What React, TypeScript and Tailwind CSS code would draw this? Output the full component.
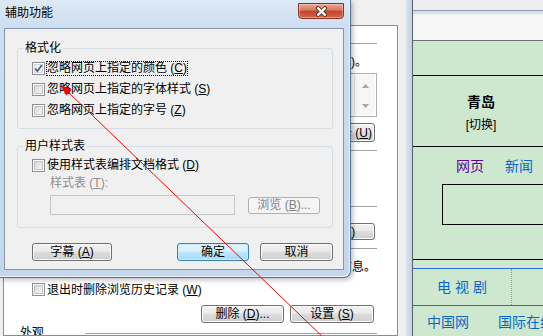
import type { ReactNode } from "react";

function Key({ k }: { k: string }) {
  return (
    <>
      (<span className="underline underline-offset-[1px]">{k}</span>)
    </>
  );
}

function CheckBox({ checked = false }: { checked?: boolean }) {
  return (
    <span className="flex h-[13px] w-[13px] shrink-0 items-center justify-center border border-[#8f8f8f] bg-white p-[1px]">
      <span
        className={`flex h-full w-full items-center justify-center border ${
          checked
            ? "border-[#d3d9e2] bg-[linear-gradient(135deg,#e9edf3,#fbfbfb)]"
            : "border-[#c4c4c4] bg-[linear-gradient(135deg,#d8d8d8,#f6f6f6)]"
        }`}
      >
        {checked && (
          <svg width="9" height="9" viewBox="0 0 9 9" className="shrink-0 overflow-visible">
            <path d="M1.2 4.6 L3.4 7.2 L7.9 1" fill="none" stroke="#4a5d8f" strokeWidth="1.7" />
          </svg>
        )}
      </span>
    </span>
  );
}

function Radio() {
  return <span className="h-[13px] w-[13px] shrink-0 rounded-full border border-[#8f8f8f] bg-[#f4f4f4]" />;
}

const buttonStyles = {
  normal:
    "border-[#707070] bg-[linear-gradient(#f2f2f2,#ebebeb_45%,#dddddd_50%,#cfcfcf)] shadow-[inset_0_0_0_1px_#fbfbfb] text-black",
  primary:
    "border-[#3c7fb1] bg-[linear-gradient(#eaf6fd,#d9f0fc_45%,#bee6fd_50%,#a7d9f5)] shadow-[inset_0_0_0_1px_#c9ecfb] text-black",
  disabled: "border-[#adb2b5] bg-[#f4f4f4] text-[#838383]",
};

function WinButton({
  children,
  className = "",
  variant = "normal",
}: {
  children: ReactNode;
  className?: string;
  variant?: "normal" | "primary" | "disabled";
}) {
  return (
    <div
      className={`flex shrink-0 items-center justify-center whitespace-nowrap rounded-[3px] border leading-[14px] ${buttonStyles[variant]} ${className}`}
    >
      {children}
    </div>
  );
}

function SectionHeader({ label, className = "" }: { label: string; className?: string }) {
  return (
    <div className={`flex h-[14px] shrink-0 items-center pl-[16px] pr-[20px] ${className}`}>
      <span className="w-[65px] shrink-0 leading-[14px]">{label}</span>
      <span className="h-px flex-1 bg-[#a0a0a0]" />
    </div>
  );
}

function InternetOptions() {
  return (
    <div className="flex w-[413px] shrink-0">
      <div className="flex w-[405px] flex-col bg-[#f0f0f0] pl-[3px] pr-[7px] pt-[25px]">
        <div className="flex flex-1 flex-col overflow-hidden border border-[#898c95] bg-white">
          <SectionHeader label="主页" className="mt-[10px]" />
          <div className="mt-[5px] shrink-0 whitespace-nowrap pr-[30px] text-right leading-[14px]">
            若要创建多个主页选项卡，请在各行分别键入地址 <Key k="R" />。
          </div>
          <div className="ml-[31px] mr-[20px] mt-[4px] flex h-[44px] shrink-0 justify-end border border-[#abadb3] p-px">
            <div className="flex w-[21px] flex-col items-center justify-between border-l border-[#e3e3e3] bg-[#f6f6f6] pb-[7px] pt-[9px]">
              <svg width="7" height="4" viewBox="0 0 7 4">
                <path d="M0 4 L3.5 0 L7 4 Z" fill="#a6a6a6" />
              </svg>
              <svg width="7" height="4" viewBox="0 0 7 4">
                <path d="M0 0 L3.5 4 L7 0 Z" fill="#a6a6a6" />
              </svg>
            </div>
          </div>
          <div className="mt-[6px] flex h-[19px] shrink-0 justify-end gap-[6px] pr-[22px]">
            <WinButton className="w-[96px]">
              使用当前页 <Key k="C" />
            </WinButton>
            <WinButton className="w-[96px]">
              使用默认值 <Key k="F" />
            </WinButton>
            <WinButton className="w-[98px]">
              使用新选项卡 <Key k="U" />
            </WinButton>
          </div>
          <SectionHeader label="启动" className="mt-[1px]" />
          <div className="mt-[4px] flex h-[16px] shrink-0 items-center gap-[3px] pl-[28px] leading-[14px]">
            <Radio />
            从上次会话中的选项卡开始 <Key k="B" />
          </div>
          <div className="mt-[2px] flex h-[16px] shrink-0 items-center gap-[3px] pl-[28px] leading-[14px]">
            <Radio />
            从主页开始 <Key k="H" />
          </div>
          <SectionHeader label="选项卡" className="mt-[4px]" />
          <div className="mt-[10px] flex h-[17px] shrink-0 items-center justify-between pl-[28px] pr-[22px]">
            <span className="leading-[14px]">更改网页在选项卡中的显示方式。</span>
            <WinButton className="h-[17px] w-[94px]">
              选项卡 <Key k="T" />
            </WinButton>
          </div>
          <SectionHeader label="浏览历史记录" className="mt-[1px]" />
          <div className="mt-[5px] shrink-0 whitespace-nowrap pr-[21px] text-right leading-[14px]">
            删除临时文件、历史记录、Cookie、保存的密码和网页表单信息。
          </div>
          <div className="mt-[6px] flex h-[19px] shrink-0 items-center pl-[28px]">
            <CheckBox />
            <span className="ml-[2px] leading-[14px]">
              退出时删除浏览历史记录 <Key k="W" />
            </span>
          </div>
          <div className="mt-[6px] flex h-[18px] shrink-0 justify-end gap-[6px] pr-[23px]">
            <WinButton className="w-[83px]">
              删除 <Key k="D" />
              ...
            </WinButton>
            <WinButton className="w-[84px]">
              设置 <Key k="S" />
            </WinButton>
          </div>
          <SectionHeader label="外观" className="mt-[3px]" />
        </div>
      </div>
      <div className="w-[8px] border-l border-r border-l-[#e9eef5] border-r-[#56616e] bg-[linear-gradient(90deg,#d9e1ec,#c7d2e0)]" />
    </div>
  );
}

function BrowserPage() {
  return (
    <div className="flex min-w-0 flex-1 flex-col overflow-hidden">
      <div className="h-[10px] shrink-0 bg-[#ebedf0]" />
      <div className="h-[4px] shrink-0 border-t border-[#8d9cb0] bg-[#d4dde9]" />
      <div className="h-[27px] shrink-0 border-b border-[#6f6f6f] bg-[#f6f6f6]" />
      <div className="flex w-[260px] flex-1 flex-col bg-[#cde8cf]">
        <div className="h-[35px] shrink-0 border-b border-black" />
        <div className="h-[71px] shrink-0 border-b border-black">
          <div className="flex w-[136px] flex-col items-center pt-[18px]">
            <span className="text-[14px] font-bold leading-[16px]">青岛</span>
            <span className="mt-[8px] leading-[14px]">[切换]</span>
          </div>
        </div>
        <div className="h-[113px] shrink-0 border-b border-black">
          <div className="flex pl-[43px] pt-[11px] text-[14px] leading-[16px]">
            <span className="text-[#660099]">网页</span>
            <span className="ml-[21px] text-[#0a66cc]">新闻</span>
          </div>
          <div className="ml-[29px] mt-[10px] h-[41px] w-[200px] border border-black" />
        </div>
        <div className="mt-[8px] flex h-[38px] shrink-0 border-y border-[#2470d8]">
          <div className="flex w-[99px] items-center justify-center border-r border-dotted border-[#7f9fc0] text-[14px] leading-[16px] text-[#0a66cc]">
            电 视 剧
          </div>
        </div>
        <div className="flex pl-[14px] pt-[8px] text-[14px] leading-[16px] text-[#0a66cc]">
          <span>中国网</span>
          <span className="ml-[29px]">国际在线</span>
        </div>
      </div>
    </div>
  );
}

function AccessibilityDialog() {
  return (
    <div className="absolute left-0 top-0 flex h-[278px] w-[351px] flex-col rounded-br-[7px] border-b border-r border-[#4f6f93] bg-[linear-gradient(180deg,#dde9f6_0px,#cddef0_28px,#c3d6ec_100%)] pb-[7px] pl-[4px] pr-[6px] shadow-[inset_-1px_-1px_0_#eaf2fb,2px_2px_5px_rgba(0,0,0,0.25)]">
      <div className="flex h-[28px] shrink-0 items-start justify-between">
        <span className="mt-[5px] pl-[1px] leading-[16px]">辅助功能</span>
        <div className="mt-[3px] flex h-[16px] w-[46px] items-center justify-center rounded-b-[4px] border border-[#83301f] bg-[linear-gradient(#eaa796,#da7c64_40%,#c5432a_55%,#d06a52)] shadow-[inset_0_0_0_1px_rgba(255,210,200,0.5)]">
          <svg width="13" height="11" viewBox="0 0 13 11">
            <path d="M3 2.2 L10 8.8 M10 2.2 L3 8.8" stroke="#5b2e27" strokeWidth="4" strokeLinecap="round" />
            <path d="M3 2.2 L10 8.8 M10 2.2 L3 8.8" stroke="#ffffff" strokeWidth="2.3" strokeLinecap="round" />
          </svg>
        </div>
      </div>
      <div className="flex flex-1 flex-col border border-[#8397b0] bg-[#f0f0f0] pl-[12px]">
        <fieldset className="mt-[12px] w-[316px] rounded-[3px] border border-[#d5dfe5]">
          <legend className="ml-[5px] px-[2px] leading-[14px]">格式化</legend>
          <div className="flex flex-col pb-[7px] pl-[14px] pt-[3px]">
            <div className="flex h-[21px] items-center">
              <CheckBox checked />
              <span className="ml-px border border-dotted border-black leading-[13px]">
                忽略网页上指定的颜色 <Key k="C" />
              </span>
            </div>
            <div className="flex h-[21px] items-center">
              <CheckBox />
              <span className="ml-px border border-transparent leading-[13px]">
                忽略网页上指定的字体样式 <Key k="S" />
              </span>
            </div>
            <div className="flex h-[21px] items-center">
              <CheckBox />
              <span className="ml-px border border-transparent leading-[13px]">
                忽略网页上指定的字号 <Key k="Z" />
              </span>
            </div>
          </div>
        </fieldset>
        <fieldset className="mt-[10px] w-[316px] rounded-[3px] border border-[#d5dfe5]">
          <legend className="ml-[5px] px-[2px] leading-[14px]">用户样式表</legend>
          <div className="flex flex-col pb-[12px] pl-[14px] pt-[2px]">
            <div className="flex h-[21px] items-center">
              <CheckBox />
              <span className="ml-px border border-transparent leading-[13px]">
                使用样式表编排文档格式 <Key k="D" />
              </span>
            </div>
            <div className="pl-[18px] leading-[14px] text-[#8d8d8d]">
              样式表 <Key k="T" />:
            </div>
            <div className="mt-[5px] flex h-[20px] items-center pl-[18px]">
              <div className="h-[20px] w-[185px] border border-[#c2c6ca] bg-[#f0f0f0]" />
              <WinButton variant="disabled" className="ml-[13px] h-[17px] w-[72px]">
                浏览 <Key k="B" />
                ...
              </WinButton>
            </div>
          </div>
        </fieldset>
        <div className="mt-[15px] flex h-[18px]">
          <WinButton className="ml-[15px] w-[80px]">
            字幕 <Key k="A" />
          </WinButton>
          <WinButton variant="primary" className="ml-[65px] w-[72px]">
            确定
          </WinButton>
          <WinButton className="ml-[11px] w-[73px]">取消</WinButton>
        </div>
      </div>
    </div>
  );
}

export default function App() {
  return (
    <div className="relative flex h-[336px] w-[543px] overflow-hidden bg-[#f0f0f0] font-['Liberation_Sans','Noto_Sans_CJK_SC',sans-serif] text-[12px] text-black">
      <InternetOptions />
      <BrowserPage />
      <AccessibilityDialog />
      <svg className="pointer-events-none absolute left-0 top-0" width="543" height="336" viewBox="0 0 543 336">
        <line x1="66" y1="90" x2="328" y2="342" stroke="#ff0000" strokeWidth="1" />
        <polygon points="61,85 71.7,89.8 66.1,95.6" fill="#ff0000" />
      </svg>
    </div>
  );
}
